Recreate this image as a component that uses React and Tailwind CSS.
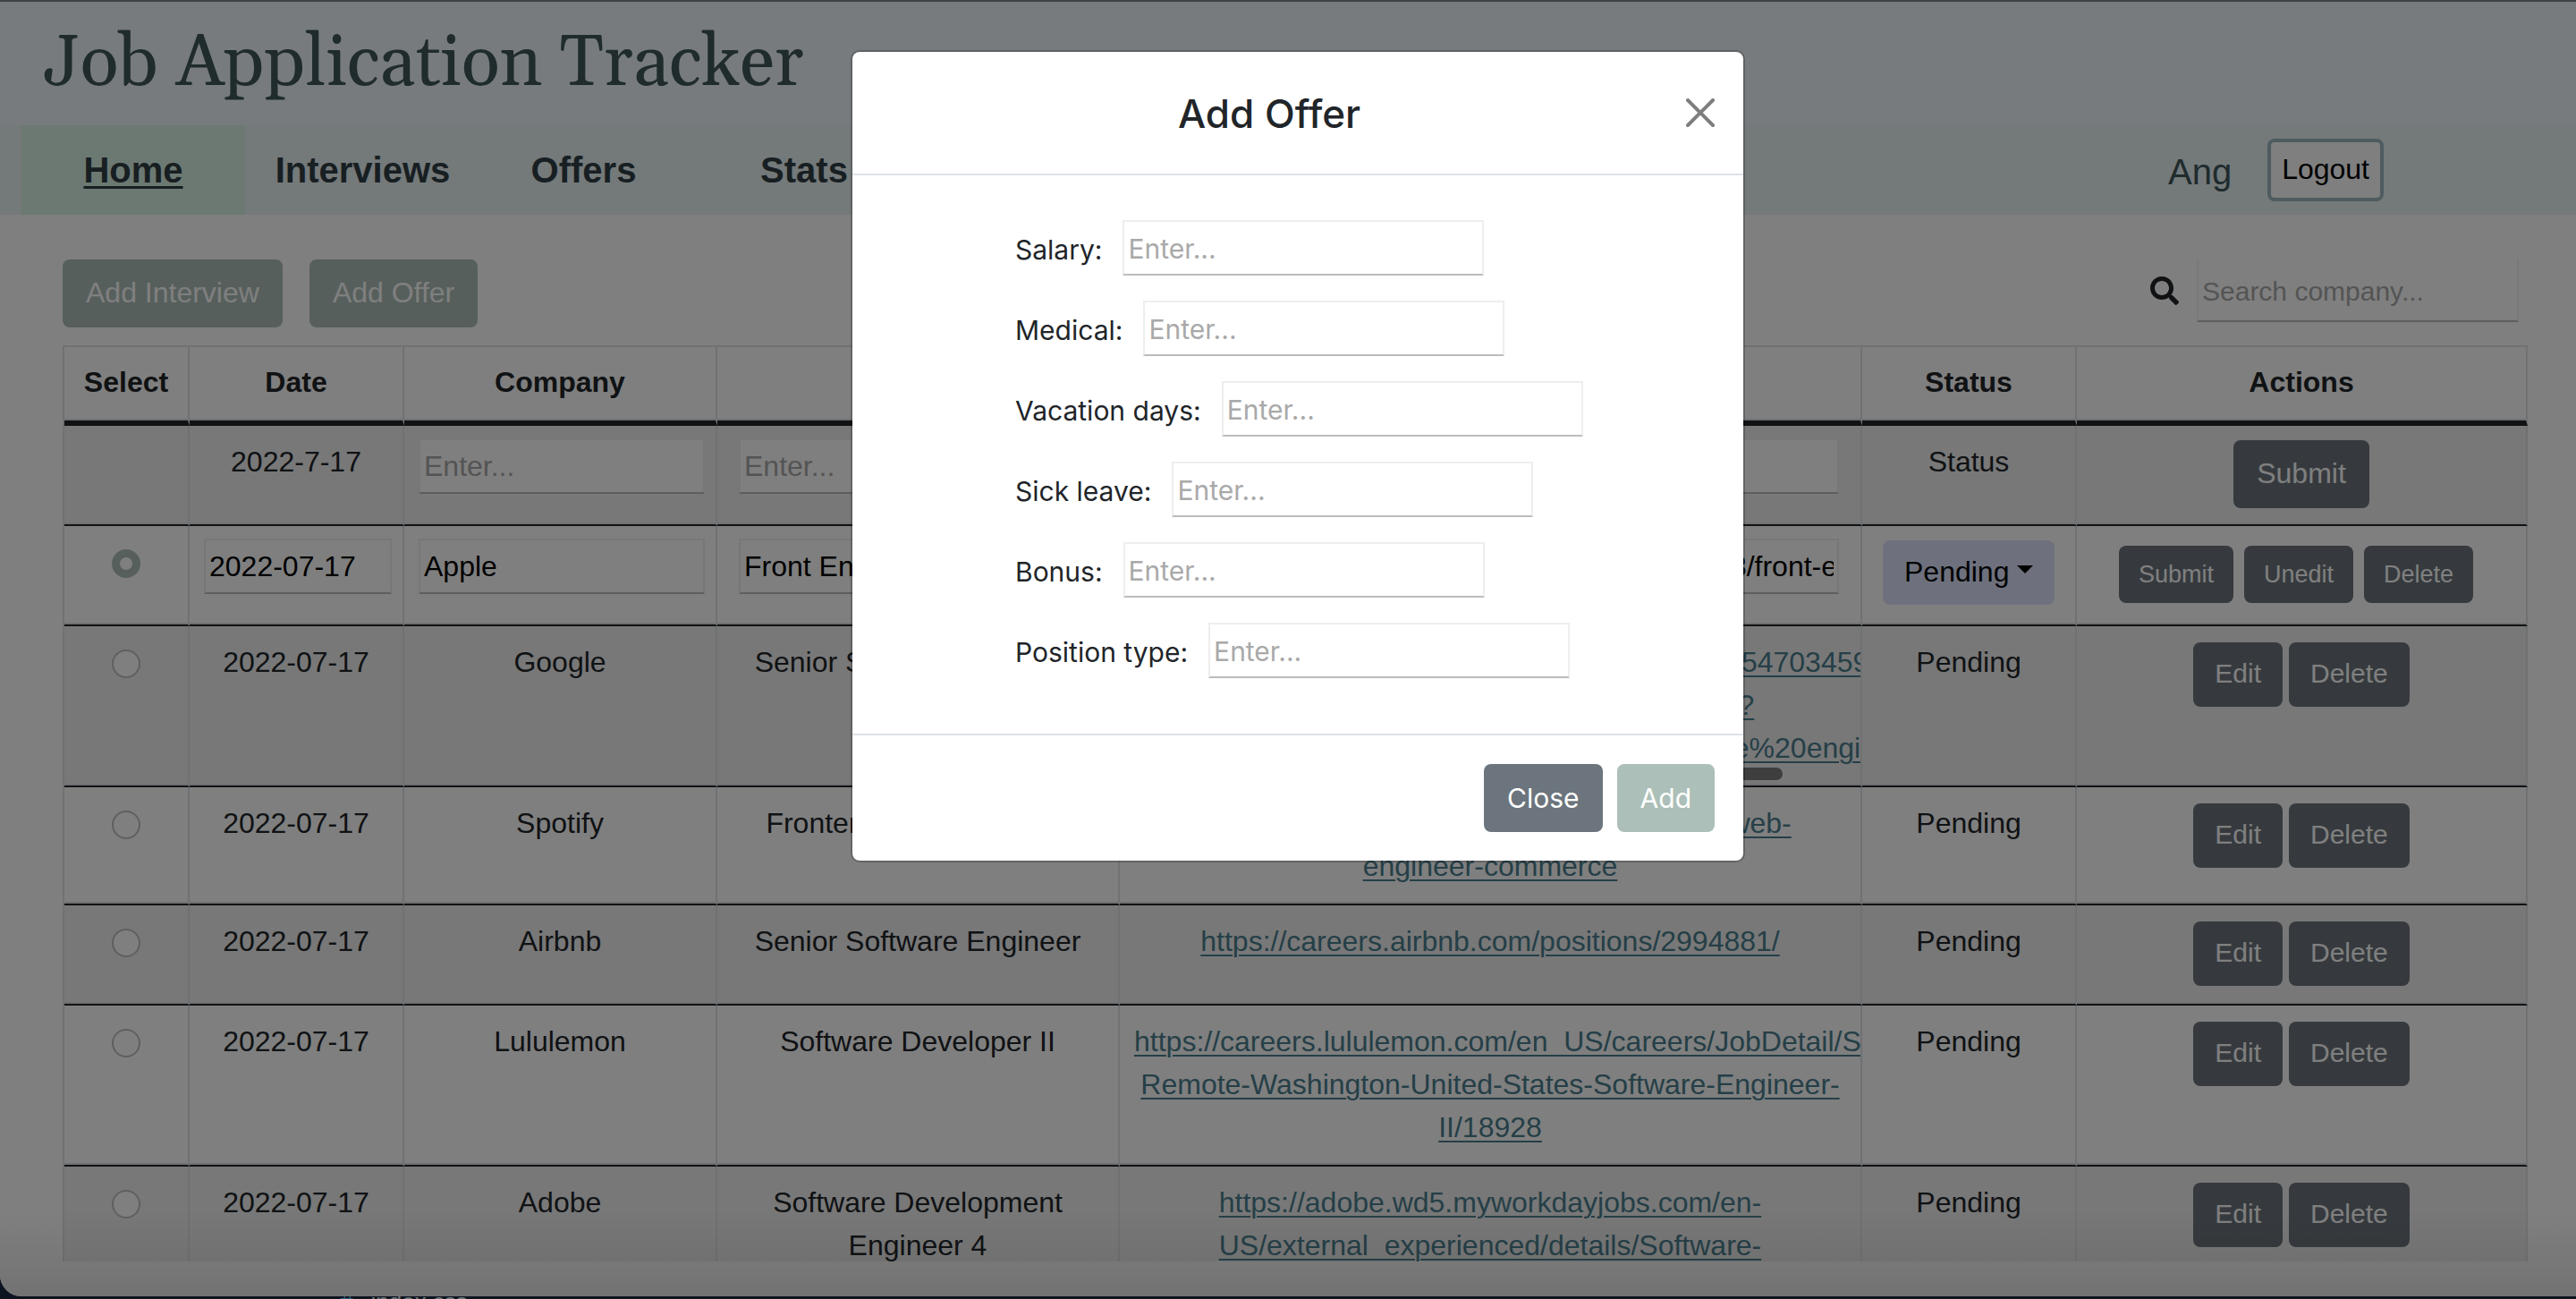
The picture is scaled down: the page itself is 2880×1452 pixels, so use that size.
import React from "react";
import { FaSearch } from "react-icons/fa";

const field =
  "h-[62px] border-2 border-[#eeeeee] border-b-[#bcbcbc] bg-white px-1 text-black outline-none placeholder:text-[#a9a9a9]";

const bigButton = "rounded-lg px-[26px] pt-[13px] pb-[15px] leading-12 text-white";
const rowButton = "rounded-lg bg-[#6c757d] px-6 pt-[11px] pb-[13px] text-[30px] leading-12 text-white";
const smallButton = "mr-3 rounded-lg bg-[#6c757d] px-[22px] py-3 text-[27px] leading-10 text-white";

const jobs = [
  {
    date: "2022-07-17",
    company: "Google",
    position: "Senior Software Engineer",
    link: [
      "https://careers.google.com/jobs/results/116435254703459",
      "senior-software-engineer-full-stack-core/?",
      "company=Google&location=London&q=software%20engineer",
    ],
    scroll: true,
  },
  {
    date: "2022-07-17",
    company: "Spotify",
    position: "Frontend Web Engineer",
    link: ["https://www.lifeatspotify.com/jobs/frontend-web-", "engineer-commerce"],
  },
  {
    date: "2022-07-17",
    company: "Airbnb",
    position: "Senior Software Engineer",
    link: ["https://careers.airbnb.com/positions/2994881/"],
  },
  {
    date: "2022-07-17",
    company: "Lululemon",
    position: "Software Developer II",
    link: [
      "https://careers.lululemon.com/en_US/careers/JobDetail/Software",
      "Remote-Washington-United-States-Software-Engineer-",
      "II/18928",
    ],
  },
  {
    date: "2022-07-17",
    company: "Adobe",
    position: "Software Development Engineer 4",
    link: [
      "https://adobe.wd5.myworkdayjobs.com/en-",
      "US/external_experienced/details/Software-",
      "Development-Engineer",
    ],
  },
];

const offerFields = [
  ["salary", "Salary:"],
  ["medical", "Medical:"],
  ["vacation", "Vacation days:"],
  ["sick", "Sick leave:"],
  ["bonus", "Bonus:"],
  ["type", "Position type:"],
];

function Cell({ children, className = "" }) {
  return (
    <td
      className={
        "overflow-hidden border-r-2 border-b-2 border-r-[#dee2e6] border-b-[#212529] px-4 pt-4 pb-[18px] align-top shadow-[inset_0_-2px_0_#dee2e6] " +
        className
      }
    >
      {children}
    </td>
  );
}

function HeadCell({ children }) {
  return (
    <th
      scope="col"
      className="border-t-2 border-r-2 border-b-[6px] border-[#dee2e6] border-b-[#212529] px-4 pt-[15px] pb-[19px] font-bold shadow-[inset_0_-2px_0_#dee2e6]"
    >
      {children}
    </th>
  );
}

function SelectRadio({ label, checked }) {
  return (
    <input
      type="radio"
      name="job"
      aria-label={label}
      defaultChecked={checked}
      className="mx-auto mt-2.5 block size-8 appearance-none rounded-full border-2 border-[#bfbfbf] bg-white checked:border-[9px] checked:border-[#acbfb8]"
    />
  );
}

function Header() {
  return (
    <header className="border-t-2 border-[#7c8488] bg-[#eef7fa]">
      <h1 className="flex h-[138px] items-center pt-0.5 pl-12 font-['Gelasio','Liberation_Serif',serif] text-[80px] leading-none text-[#3f575b]">
        Job Application Tracker
      </h1>
      <nav className="flex h-[100px] items-stretch bg-[#e8f3f4] pl-6 text-[40px] text-[#303f44]">
        <a href="#home" className="mr-2 flex w-[250px] items-center justify-center bg-[#d9f2e5] font-bold underline decoration-3 underline-offset-4">
          Home
        </a>
        <a href="#interviews" className="flex w-[247px] items-center justify-center font-bold">
          Interviews
        </a>
        <a href="#offers" className="flex w-[247px] items-center justify-center font-bold">
          Offers
        </a>
        <a href="#stats" className="flex w-[246px] items-center justify-center font-bold">
          Stats
        </a>
        <div className="ml-auto flex items-center gap-10 pr-[215px]">
          <span className="pt-1 text-[#3f575b]">Ang</span>
          <button type="button" className="rounded-lg border-4 border-[#9cb8c0] bg-white px-3 pt-1.5 pb-2 text-[32px] leading-12 text-black">
            Logout
          </button>
        </div>
      </nav>
    </header>
  );
}

function Toolbar() {
  return (
    <div className="flex items-start gap-[30px] pr-2.5">
      <button type="button" className={bigButton + " bg-[#acbfb8]"}>Add Interview</button>
      <button type="button" className={bigButton + " bg-[#acbfb8]"}>Add Offer</button>
      <label className="ml-auto flex items-center gap-5">
        <FaSearch className="size-8" aria-label="Search" />
        <input
          type="text"
          placeholder="Search company..."
          className="h-[70px] w-[360px] border-2 border-t-0 border-[#f2f2f2] border-b-[#bcbcbc] px-1 pt-1 text-[30px] outline-none placeholder:text-[#a9a9a9]"
        />
      </label>
    </div>
  );
}

function JobTable() {
  return (
    <table className="w-full table-fixed border-separate border-spacing-0 border-l-2 border-[#dee2e6] text-center leading-12">
      <colgroup>
        <col className="w-[140px]" />
        <col className="w-[240px]" />
        <col className="w-[350px]" />
        <col className="w-[450px]" />
        <col className="w-[830px]" />
        <col className="w-[240px]" />
        <col />
      </colgroup>
      <thead>
        <tr>
          <HeadCell>Select</HeadCell>
          <HeadCell>Date</HeadCell>
          <HeadCell>Company</HeadCell>
          <HeadCell>Position</HeadCell>
          <HeadCell>Link</HeadCell>
          <HeadCell>Status</HeadCell>
          <HeadCell>Actions</HeadCell>
        </tr>
      </thead>
      <tbody>
        <tr className="bg-[#f0f0f0]">
          <Cell />
          <Cell>2022-7-17</Cell>
          <Cell className="pr-3!">
            <input aria-label="Company" placeholder="Enter..." className={field + " -mt-0.5 block w-full"} />
          </Cell>
          <Cell>
            <input aria-label="Position" placeholder="Enter..." className={field + " mx-auto -mt-0.5 block w-[400px]"} />
          </Cell>
          <Cell>
            <input aria-label="Link" placeholder="Enter..." className={field + " mx-auto -mt-0.5 block w-[780px]"} />
          </Cell>
          <Cell>Status</Cell>
          <Cell>
            <button type="button" className={bigButton + " mx-auto block bg-[#6c757d]"}>Submit</button>
          </Cell>
        </tr>
        <tr>
          <Cell>
            <SelectRadio label="Select Apple" checked />
          </Cell>
          <Cell className="pr-3!">
            <input aria-label="Date" defaultValue="2022-07-17" className={field + " -mt-0.5 block w-full"} />
          </Cell>
          <Cell className="pr-3!">
            <input aria-label="Company" defaultValue="Apple" className={field + " -mt-0.5 block w-full"} />
          </Cell>
          <Cell>
            <input aria-label="Position" defaultValue="Front End Engineer" className={field + " mx-auto -mt-0.5 block w-[400px]"} />
          </Cell>
          <Cell>
            <input
              aria-label="Link"
              defaultValue="https://jobs.apple.com/en-us/details/200405553/front-end-engineer"
              className={field + " mx-auto -mt-0.5 block w-[780px]"}
            />
          </Cell>
          <Cell>
            <div className="relative mx-auto w-48">
              <select
                aria-label="Status"
                defaultValue="Pending"
                className="block h-[72px] w-full appearance-none rounded-lg bg-[#dce2fa] pb-0.5 pl-6 text-black"
              >
                <option>Pending</option>
                <option>Accepted</option>
                <option>Rejected</option>
              </select>
              <svg viewBox="0 0 18 9" className="pointer-events-none absolute top-7 right-6 h-[9px] w-[18px]">
                <path d="M0 0h18L9 9z" />
              </svg>
            </div>
          </Cell>
          <Cell>
            <div className="flex justify-center py-1.5">
              <button type="button" className={smallButton}>Submit</button>
              <button type="button" className={smallButton}>Unedit</button>
              <button type="button" className={smallButton}>Delete</button>
            </div>
          </Cell>
        </tr>
        {jobs.map((job, i) => (
          <tr key={job.company} className={i % 2 === 0 ? "bg-[#f0f0f0]" : ""}>
            <Cell>
              <SelectRadio label={"Select " + job.company} />
            </Cell>
            <Cell>{job.date}</Cell>
            <Cell>{job.company}</Cell>
            <Cell>{job.position}</Cell>
            <Cell className="relative">
              <a href="#job" className="text-[#4b7f8f] underline decoration-2 underline-offset-4">
                {job.link.map((line) => (
                  <span key={line} className="block whitespace-nowrap">{line}</span>
                ))}
              </a>
              {job.scroll && <span className="absolute bottom-1.5 left-1 h-3.5 w-[89%] rounded-full bg-[#7c7c7c]" />}
            </Cell>
            <Cell>Pending</Cell>
            <Cell>
              <div className="flex justify-center gap-[7px] py-0.5">
                <button type="button" className={rowButton}>Edit</button>
                <button type="button" className={rowButton}>Delete</button>
              </div>
            </Cell>
          </tr>
        ))}
      </tbody>
    </table>
  );
}

function OfferDialog() {
  return (
    <div className="absolute inset-0 flex items-start justify-center bg-black/50 pt-14 pl-[22px]">
      <div
        role="dialog"
        aria-labelledby="offer-title"
        className="w-[1000px] rounded-[10px] border-2 border-black/20 bg-white bg-clip-padding font-['Inter',sans-serif] text-[30px] text-[#212529]"
      >
        <div className="flex h-[138px] items-center border-b-2 border-[#dee2e6] pr-8">
          <h2 id="offer-title" className="flex-1 pt-0.5 text-center text-[44px] leading-none font-medium">Add Offer</h2>
          <button type="button" aria-label="Close dialog" className="opacity-50">
            <svg viewBox="0 0 16 16" className="size-8">
              <path d="M.293.293a1 1 0 011.414 0L8 6.586 14.293.293a1 1 0 111.414 1.414L9.414 8l6.293 6.293a1 1 0 01-1.414 1.414L8 9.414l-6.293 6.293a1 1 0 01-1.414-1.414L6.586 8 .293 1.707a1 1 0 010-1.414z" />
            </svg>
          </button>
        </div>
        <form className="flex flex-col gap-7 pt-[50px] pb-[62px] pl-[182px]">
          {offerFields.map(([id, label]) => (
            <div key={id} className="flex items-center gap-[23px]">
              <label htmlFor={id} className="pt-1">{label}</label>
              <input id={id} placeholder="Enter..." className={field + " w-[404px] pt-0.5"} />
            </div>
          ))}
        </form>
        <div className="flex justify-end gap-4 border-t-2 border-[#dee2e6] p-8">
          <button type="button" className="rounded-lg bg-[#6c757d] px-[26px] py-3.5 leading-12 text-white">Close</button>
          <button type="button" className="rounded-lg bg-[#acbfb8] px-[26px] py-3.5 leading-12 text-white">Add</button>
        </div>
      </div>
    </div>
  );
}

export default function App() {
  return (
    <div className="flex h-screen flex-col overflow-hidden bg-[#0c1420] font-['Liberation_Sans',Arial,sans-serif] text-[32px] text-[#212529]">
      <div className="relative flex min-h-0 flex-1 flex-col overflow-hidden rounded-bl-3xl bg-white">
        <Header />
        <main className="flex min-h-0 flex-1 flex-col gap-5 pt-[50px] pr-[54px] pb-[39px] pl-[70px]">
          <Toolbar />
          <div className="min-h-0 flex-1 overflow-hidden">
            <JobTable />
          </div>
        </main>
        <div className="pointer-events-none absolute inset-x-0 bottom-0 h-24 bg-linear-to-b from-transparent to-black/10" />
        <OfferDialog />
      </div>
      <footer className="flex h-[3px] gap-5 overflow-hidden pl-[380px] text-[26px] leading-3 text-[#6f767d]">
        <span className="text-[#2f6078]">#</span>
        <span>index.css</span>
      </footer>
    </div>
  );
}
